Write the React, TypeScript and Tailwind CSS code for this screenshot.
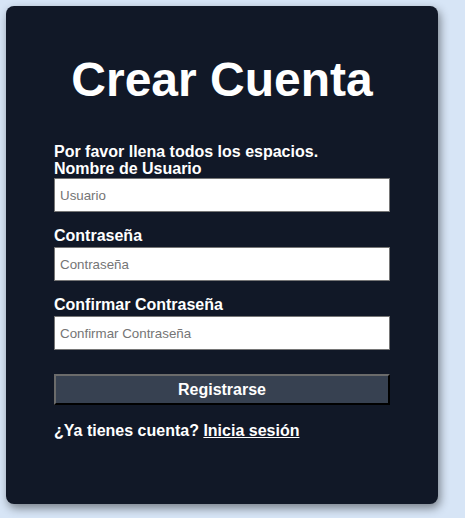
import { useState } from 'react'

type Field = {
  id: string
  label: string
  placeholder: string
  type: string
}

const fields: Field[] = [
  { id: 'usuario', label: 'Nombre de Usuario', placeholder: 'Usuario', type: 'text' },
  { id: 'password', label: 'Contraseña', placeholder: 'Contraseña', type: 'password' },
  { id: 'confirm', label: 'Confirmar Contraseña', placeholder: 'Confirmar Contraseña', type: 'password' },
]

export default function App() {
  const [values, setValues] = useState<Record<string, string>>({})

  const onChange = (id: string) => (event: React.ChangeEvent<HTMLInputElement>) => {
    setValues((prev) => ({ ...prev, [id]: event.target.value }))
  }

  return (
    <div className="min-h-screen bg-[#d7e5f6] p-[6px] font-['Liberation_Sans',Arial,sans-serif]">
      <div className="w-[432px] rounded-lg bg-[#111827] px-12 pt-[50px] pb-[64px] text-white shadow-[2px_4px_10px_rgba(0,0,0,0.45)]">
        <h1 className="text-center text-5xl leading-none font-bold">Crear Cuenta</h1>

        <form className="mt-[39px]" onSubmit={(e) => e.preventDefault()}>
          <p className="text-base leading-[17px] font-bold">Por favor llena todos los espacios.</p>

          {fields.map((field, i) => (
            <div key={field.id} className={i === 0 ? '' : 'mt-[15px]'}>
              <label
                htmlFor={field.id}
                className={`block text-base leading-[18px] font-bold ${i === 0 ? '' : 'mb-[2px]'}`}
              >
                {field.label}
              </label>
              <input
                id={field.id}
                type={field.type}
                placeholder={field.placeholder}
                value={values[field.id] ?? ''}
                onChange={onChange(field.id)}
                className="block h-[34px] w-full border border-[#767676] bg-white pl-[5px] text-[13.33px] text-black placeholder:text-[#757575] focus:outline-none"
              />
            </div>
          ))}

          <button
            type="submit"
            className="mt-6 block h-[31px] w-full border-2 border-t-[#6b6b6b] border-l-[#6b6b6b] border-r-black border-b-black bg-[#374151] text-base font-bold text-white"
          >
            Registrarse
          </button>

          <p className="mt-[17px] text-base leading-[18px] font-bold">
            ¿Ya tienes cuenta?{' '}
            <a href="#" className="underline">
              Inicia sesión
            </a>
          </p>
        </form>
      </div>
    </div>
  )
}
